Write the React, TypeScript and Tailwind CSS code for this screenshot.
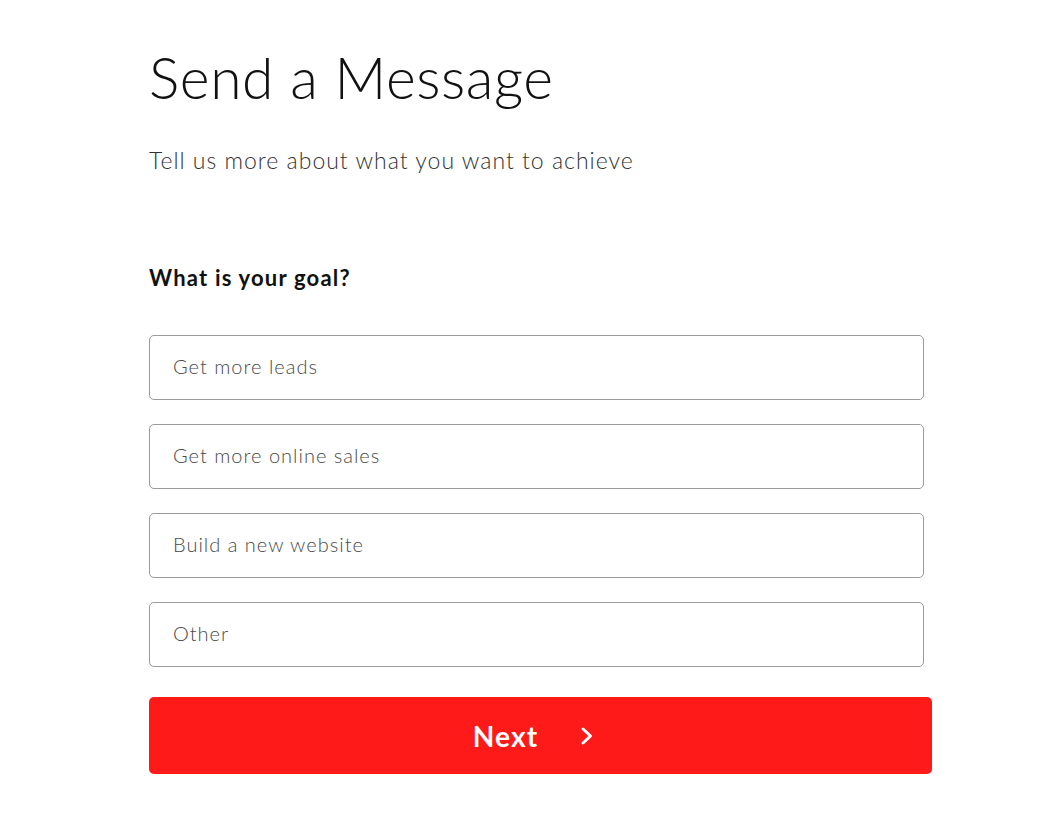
import React from "react";

const options = ["Get more leads", "Get more online sales", "Build a new website", "Other"];

export default function App() {
  return (
    <div className="min-h-[816px] w-[1040px] bg-white font-['Lato','Open_Sans',sans-serif]">
      <div className="pl-[149px] pt-[42px]">
        <h1 className="text-[57px] leading-[70px] font-light text-[#111] tracking-[0.6px]">Send a Message</h1>
        <p className="mt-[34px] text-[23px] leading-[28px] font-light text-[#333] tracking-[1px]">Tell us more about what you want to achieve</p>
        <h2 className="mt-[90px] text-[22px] leading-[28px] font-bold text-[#111] tracking-[1.2px]">What is your goal?</h2>
        <div className="mt-[43px] flex w-[775px] flex-col gap-[24px]">
          {options.map((o) => (
            <div
              key={o}
              className="flex h-[65px] items-center rounded-[5px] border border-[#9a9a9a] pl-[23px] pb-[3px] text-[20px] font-light text-[#4a4a4a] tracking-[1px]"
            >
              {o}
            </div>
          ))}
        </div>
        <button className="mt-[30px] flex h-[77px] w-[783px] items-center justify-center gap-[40px] rounded-[5px] bg-[#ff1a1a] pr-[12px] text-white">
          <span className="text-[28px] font-bold tracking-[1.2px]">Next</span>
          <svg width="18" height="22" viewBox="0 0 18 22" fill="none" stroke="white" strokeWidth="3" strokeLinecap="round" strokeLinejoin="round">
            <path d="M5 4l7.5 7-7.5 7" />
          </svg>
        </button>
      </div>
    </div>
  );
}
